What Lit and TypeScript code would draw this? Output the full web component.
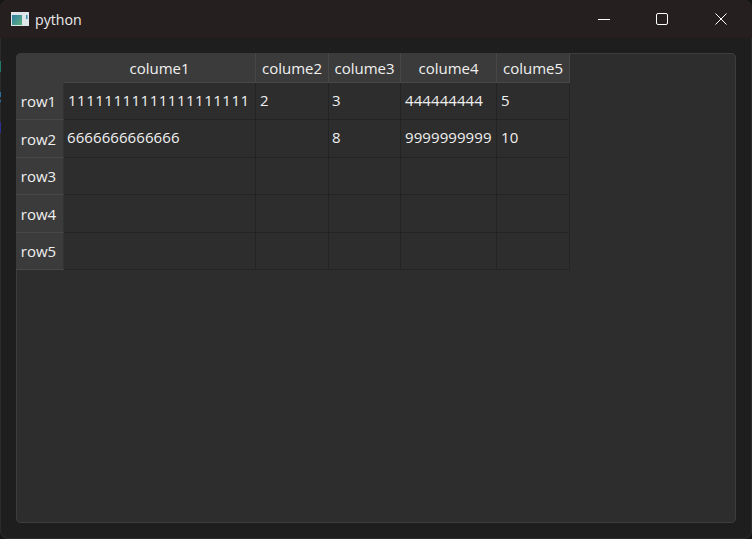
import { LitElement, html, css, svg } from "lit";
import { customElement } from "lit/decorators.js";

const columns = ["colume1", "colume2", "colume3", "colume4", "colume5"];
const rows: string[][] = [
  ["11111111111111111111", "2", "3", "444444444", "5"],
  ["6666666666666", "", "8", "9999999999", "10"],
  ["", "", "", "", ""],
  ["", "", "", "", ""],
  ["", "", "", "", ""],
];

@customElement("app-root")
export class AppRoot extends LitElement {
  static styles = css`
    :host {
      display: block;
      width: 752px;
      height: 539px;
      background: #151515;
      font-family: "Open Sans", "Noto Sans", sans-serif;
      overflow: hidden;
      position: relative;
    }
    .edge {
      position: absolute;
      left: 0;
      top: 61px;
      width: 1px;
      height: 72px;
      background: linear-gradient(
        to bottom,
        #1f7a6a 0 11px,
        transparent 11px 31px,
        #2f6f9f 31px 36px,
        transparent 36px 39px,
        #2f6f9f 39px 41px,
        transparent 41px 61px,
        #2b2f8f 61px 72px
      );
    }
    .window {
      width: 752px;
      height: 539px;
      box-sizing: border-box;
      border-radius: 8px;
      background: #1e1e1e;
      display: flex;
      flex-direction: column;
      overflow: hidden;
      box-shadow: inset 0 0 0 1px #2b2b2b;
    }
    .titlebar {
      height: 38px;
      flex: none;
      background: #261f1f;
      display: flex;
      align-items: center;
      color: #ececec;
      font-size: 14.2px;
      padding-right: 2px;
    }
    .app-icon {
      margin-left: 11px;
      margin-right: 6px;
      flex: none;
    }
    .title {
      flex: 1;
    }
    .winbtn {
      width: 58px;
      height: 38px;
      display: flex;
      align-items: center;
      justify-content: center;
      flex: none;
    }
    .winbtn.max {
      margin-right: 1px;
    }
    .body {
      flex: 1;
      padding: 15px 16px 16px;
      min-height: 0;
    }
    .panel {
      height: 100%;
      box-sizing: border-box;
      background: #2d2d2d;
      border-radius: 5px;
      box-shadow: inset 0 0 0 1px #3d3d3d;
      overflow: hidden;
    }
    .table {
      display: grid;
      grid-template-columns: 48px 192px 73px 72px 96px 73px;
      grid-template-rows: 30px 37px 38px 37px 38px 37px;
      width: 554px;
      font-size: 15px;
      color: #f0f0f0;
    }
    .corner,
    .hcell,
    .rcell {
      background: #3b3b3b;
      display: flex;
      align-items: center;
      box-sizing: border-box;
    }
    .hcell {
      justify-content: center;
      border-right: 1px solid #474747;
      border-bottom: 1px solid #474747;
      white-space: nowrap;
    }
    .rcell {
      justify-content: center;
      border-bottom: 1px solid #474747;
      border-right: 1px solid #333;
      padding-right: 2px;
    }
    .cell {
      box-sizing: border-box;
      border-right: 1px solid #242424;
      border-bottom: 1px solid #242424;
      padding: 7px 0 0 3px;
      line-height: 20px;
      white-space: nowrap;
      overflow: hidden;
      letter-spacing: 0.08px;
    }
    .cell.wide {
      padding-left: 4px;
    }
    .cell.ones {
      letter-spacing: 0.5px;
      padding-left: 4px;
    }
  `;

  private icon() {
    return svg`<svg class="app-icon" width="18" height="14" viewBox="0 0 18 14">
      <defs><linearGradient id="g" x1="0" y1="0" x2="1" y2="1">
        <stop offset="0" stop-color="#2f7fa8"/><stop offset="1" stop-color="#5fb07a"/>
      </linearGradient></defs>
      <rect width="18" height="14" fill="#dfe6ea"/>
      <rect x="1" y="3" width="10" height="10" fill="url(#g)"/>
      <rect x="15" y="3" width="1.5" height="4" fill="#3f8fb5"/>
    </svg>`;
  }

  render() {
    return html`
      <div class="window">
        <div class="titlebar">
          ${this.icon()}
          <span class="title">python</span>
          <div class="winbtn">
            <svg width="12" height="12" viewBox="0 0 12 12"><path d="M0 6.5H12" stroke="#ffffff" fill="none"/></svg>
          </div>
          <div class="winbtn max">
            <svg width="12" height="12" viewBox="0 0 12 12"><rect x="0.5" y="0.5" width="11" height="11" rx="1.5" stroke="#ffffff" fill="none"/></svg>
          </div>
          <div class="winbtn">
            <svg width="12" height="12" viewBox="0 0 12 12"><path d="M0.5 0.5L11.5 11.5M11.5 0.5L0.5 11.5" stroke="#ffffff" fill="none"/></svg>
          </div>
        </div>
        <div class="body">
          <div class="panel">
            <div class="table">
              <div class="corner"></div>
              ${columns.map((c) => html`<div class="hcell">${c}</div>`)}
              ${rows.map(
                (r, i) => html`
                  <div class="rcell">row${i + 1}</div>
                  ${r.map(
                    (v, j) =>
                      html`<div class="cell ${j === 1 || j >= 3 ? "wide" : ""} ${v.startsWith("111") ? "ones" : ""}">${v}</div>`
                  )}
                `
              )}
            </div>
          </div>
        </div>
      </div>
      <div class="edge"></div>
    `;
  }
}
